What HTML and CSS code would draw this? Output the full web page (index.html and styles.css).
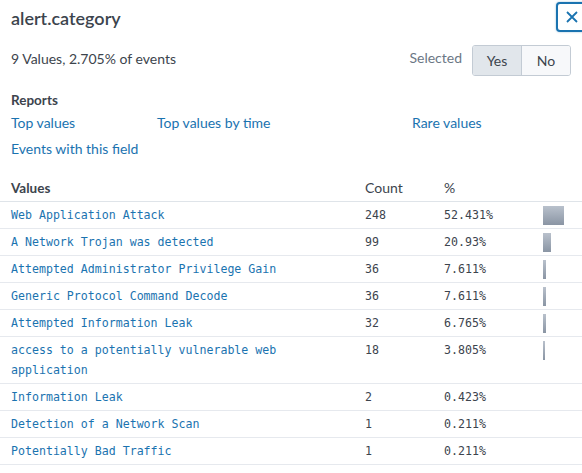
FILE: index.html
```html
<!DOCTYPE html>
<html>
<head>
<meta charset="utf-8">
<link rel="stylesheet" href="styles.css">
</head>
<body>
<div class="panel">
  <div class="head">
    <h1 class="title">alert.category</h1>
    <button class="close" aria-label="Close">
      <svg width="12" height="12" viewBox="0 0 12 12"><path d="M1 1 L11 11 M11 1 L1 11" stroke="#1a73b0" stroke-width="1.8" fill="none"/></svg>
    </button>
  </div>
  <div class="summary">
    <span class="count-text">9 Values, 2.705% of events</span>
    <div class="selected">
      <span class="sel-label">Selected</span>
      <div class="toggle">
        <span class="tbtn active">Yes</span>
        <span class="tbtn">No</span>
      </div>
    </div>
  </div>
  <div class="reports">
    <div class="rep-title">Reports</div>
    <div class="rep-links">
      <a class="lnk">Top values</a>
      <a class="lnk">Top values by time</a>
      <a class="lnk">Rare values</a>
      <a class="lnk">Events with this field</a>
    </div>
  </div>
  <table class="vals">
    <thead>
      <tr><th class="c-val">Values</th><th class="c-cnt">Count</th><th class="c-pct">%</th><th class="c-bar"></th></tr>
    </thead>
    <tbody>
      <tr><td class="c-val"><a>Web Application Attack</a></td><td class="c-cnt">248</td><td class="c-pct">52.431%</td><td class="c-bar"><div class="bar" style="width:21px"></div></td></tr>
      <tr><td class="c-val"><a>A Network Trojan was detected</a></td><td class="c-cnt">99</td><td class="c-pct">20.93%</td><td class="c-bar"><div class="bar" style="width:8px"></div></td></tr>
      <tr><td class="c-val"><a>Attempted Administrator Privilege Gain</a></td><td class="c-cnt">36</td><td class="c-pct">7.611%</td><td class="c-bar"><div class="bar" style="width:3px"></div></td></tr>
      <tr><td class="c-val"><a>Generic Protocol Command Decode</a></td><td class="c-cnt">36</td><td class="c-pct">7.611%</td><td class="c-bar"><div class="bar" style="width:3px"></div></td></tr>
      <tr><td class="c-val"><a>Attempted Information Leak</a></td><td class="c-cnt">32</td><td class="c-pct">6.765%</td><td class="c-bar"><div class="bar" style="width:3px"></div></td></tr>
      <tr><td class="c-val"><a>access to a potentially vulnerable web application</a></td><td class="c-cnt">18</td><td class="c-pct">3.805%</td><td class="c-bar"><div class="bar" style="width:2px"></div></td></tr>
      <tr><td class="c-val"><a>Information Leak</a></td><td class="c-cnt">2</td><td class="c-pct">0.423%</td><td class="c-bar"></td></tr>
      <tr><td class="c-val"><a>Detection of a Network Scan</a></td><td class="c-cnt">1</td><td class="c-pct">0.211%</td><td class="c-bar"></td></tr>
      <tr><td class="c-val"><a>Potentially Bad Traffic</a></td><td class="c-cnt">1</td><td class="c-pct">0.211%</td><td class="c-bar"></td></tr>
    </tbody>
  </table>
</div>
</body>
</html>
```
FILE: styles.css
```css
html, body {
  margin: 0;
  padding: 0;
  background: #fff;
  overflow: hidden;
}
.panel {
  width: 582px;
  font-family: Lato, "Open Sans", sans-serif;
  color: #3c444d;
  font-size: 14px;
}
.head {
  display: flex;
  justify-content: space-between;
  align-items: flex-start;
  height: 40px;
  padding-left: 11px;
}
.title {
  margin: 0;
  padding-top: 6px;
  font-size: 18px;
  font-weight: 600;
  line-height: 24px;
  color: #3c444d;
}
.close {
  margin-top: 2px;
  margin-right: -6px;
  width: 32px;
  height: 30px;
  border: 2px solid #1a73b0;
  border-radius: 4px;
  background: #fff;
  padding: 0 0 0 8px;
  display: flex;
  align-items: center;
  justify-content: flex-start;
  box-shadow: 0 0 2px rgba(26,115,176,0.5);
}
.close svg { display: block; }
.summary {
  display: flex;
  justify-content: space-between;
  align-items: center;
  padding: 5px 11px 0 11px;
  height: 31px;
}
.count-text {
  line-height: 18px;
  position: relative;
  top: -2px;
}
.selected {
  display: flex;
  align-items: center;
  gap: 10px;
}
.sel-label {
  color: #6b7785;
  position: relative;
  top: -3px;
}
.toggle {
  display: flex;
  border: 1px solid #c3cbd4;
  border-radius: 3px;
  overflow: hidden;
  height: 29px;
}
.tbtn {
  width: 48px;
  display: flex;
  align-items: center;
  justify-content: center;
  background: #f7f8fa;
  color: #3c444d;
}
.tbtn.active {
  background: #e1e6eb;
  border-right: 1px solid #c3cbd4;
}
.reports {
  padding: 14px 11px 0 11px;
}
.rep-title {
  font-weight: 700;
  font-size: 13.5px;
  line-height: 20px;
}
.rep-links {
  display: grid;
  grid-template-columns: 146px 255px auto;
  row-gap: 6px;
  margin-top: 3px;
}
.lnk {
  color: #1a73b0;
  line-height: 20px;
}
.vals {
  width: 582px;
  border-collapse: collapse;
  margin-top: 16px;
}
.vals th {
  text-align: left;
  font-weight: 400;
  height: 23px;
  padding: 0 0 3px 0;
  border-bottom: 1px solid #dfe4e9;
  line-height: 20px;
  vertical-align: bottom;
}
.vals th.c-val { font-weight: 700; padding-left: 11px; font-size: 13.5px; }
.vals td {
  font-family: "DejaVu Sans Mono", monospace;
  font-size: 11.6px;
  line-height: 20px;
  padding: 3px 0 3px 0;
  border-bottom: 1px solid #e6e9ee;
  vertical-align: top;
  color: #3c444d;
}
.vals td.c-val { padding-left: 11px; padding-right: 8px; }
.vals td a { color: #1a73b0; }
.c-val { width: 346px; }
.c-cnt { width: 79px; }
.c-pct { width: 99px; }
.c-bar { width: 39px; }
.bar {
  height: 19px;
  margin-top: 1px;
  background: linear-gradient(#b9c1cc, #8a95a4);
}
```
